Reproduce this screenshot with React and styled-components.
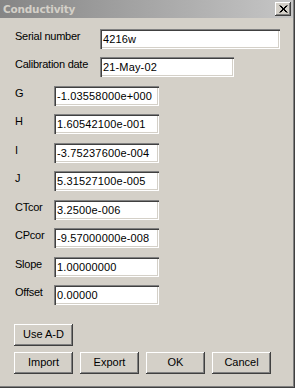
import React from "react";
import styled, { createGlobalStyle } from "styled-components";

const Global = createGlobalStyle`
  html, body { margin: 0; padding: 0; background: #d4d0c8; }
  body { font-family: "Liberation Sans", Arial, sans-serif; font-size: 11px; }
  * { box-sizing: border-box; }
`;

const Window = styled.div`
  width: 295px;
  height: 388px;
  background: #d4d0c8;
  display: flex;
  flex-direction: column;
  border-right: 1px solid #404040;
  border-bottom: 1px solid #404040;
  box-shadow: inset -1px -1px 0 #808080;
  color: #000;
`;

const TitleBar = styled.div`
  height: 18px;
  margin-right: 1px;
  display: flex;
  align-items: center;
  justify-content: space-between;
  padding: 0 2px 0 2px;
  background: linear-gradient(to right, #858585, #c6c6c6);
`;

const Title = styled.span`
  font-family: "DejaVu Sans", Verdana, sans-serif;
  font-weight: bold;
  font-size: 10.5px;
  letter-spacing: -0.2px;
  color: #d4d0c8;
  padding-left: 1px;
`;

const CloseButton = styled.div`
  width: 16px;
  height: 14px;
  background: #d4d0c8;
  box-shadow: inset -1px -1px 0 #404040, inset 1px 1px 0 #ffffff,
    inset -2px -2px 0 #808080;
  display: flex;
  align-items: center;
  justify-content: center;
`;

const Body = styled.div`
  flex: 1;
  display: flex;
  flex-direction: column;
  padding: 11px 0 0 15px;
`;

const Rows = styled.div`
  display: flex;
  flex-direction: column;
  gap: 8.45px;
`;

const Row = styled.div`
  display: flex;
  align-items: flex-start;
  height: 20px;
`;

const Label = styled.span`
  width: ${(p) => p.$w}px;
  flex: none;
  line-height: 14px;
  font-size: 11px;
  letter-spacing: -0.25px;
  white-space: nowrap;
`;

const Field = styled.div`
  width: ${(p) => p.$w}px;
  height: 20px;
  background: #fff;
  box-shadow: inset 1px 1px 0 #808080, inset 2px 2px 0 #404040,
    inset -1px -1px 0 #ffffff, inset -2px -2px 0 #d4d0c8;
  padding: 3px 0 0 3px;
  font-size: 11px;
  line-height: 14px;
  letter-spacing: 0.15px;
  white-space: nowrap;
  overflow: hidden;
`;

const Button = styled.div`
  width: 59px;
  height: 22px;
  background: #d4d0c8;
  box-shadow: inset -1px -1px 0 #404040, inset 1px 1px 0 #ffffff,
    inset -2px -2px 0 #808080;
  display: flex;
  align-items: center;
  justify-content: center;
  font-size: 11px;
  padding-bottom: 1px;
`;

const SingleButtonRow = styled.div`
  margin-top: 19px;
  margin-left: -1px;
  display: flex;
`;

const ButtonRow = styled.div`
  margin-top: 6px;
  margin-left: -1px;
  display: flex;
  gap: 7px;
`;

const top = [
  ["Serial number", "4216w", 180],
  ["Calibration date", "21-May-02", 134],
];

const params = [
  ["G", "-1.03558000e+000"],
  ["H", "1.60542100e-001"],
  ["I", "-3.75237600e-004"],
  ["J", "5.31527100e-005"],
  ["CTcor", "3.2500e-006"],
  ["CPcor", "-9.57000000e-008"],
  ["Slope", "1.00000000"],
  ["Offset", "0.00000"],
];

export default function App() {
  return (
    <>
      <Global />
      <Window>
        <TitleBar>
          <Title>Conductivity</Title>
          <CloseButton>
            <svg width="9" height="8" viewBox="0 0 9 8">
              <path d="M0.5 0.5 L7.5 7.5 M1.5 0.5 L8.5 7.5 M7.5 0.5 L0.5 7.5 M8.5 0.5 L1.5 7.5" stroke="#000" strokeWidth="1" />
            </svg>
          </CloseButton>
        </TitleBar>
        <Body>
          <Rows>
            {top.map(([l, v, w]) => (
              <Row key={l}>
                <Label $w={85}>{l}</Label>
                <Field $w={w}>{v}</Field>
              </Row>
            ))}
            {params.map(([l, v]) => (
              <Row key={l}>
                <Label $w={39}>{l}</Label>
                <Field $w={105}>{v}</Field>
              </Row>
            ))}
          </Rows>
          <SingleButtonRow>
            <Button>Use A-D</Button>
          </SingleButtonRow>
          <ButtonRow>
            <Button>Import</Button>
            <Button>Export</Button>
            <Button>OK</Button>
            <Button>Cancel</Button>
          </ButtonRow>
        </Body>
      </Window>
    </>
  );
}
